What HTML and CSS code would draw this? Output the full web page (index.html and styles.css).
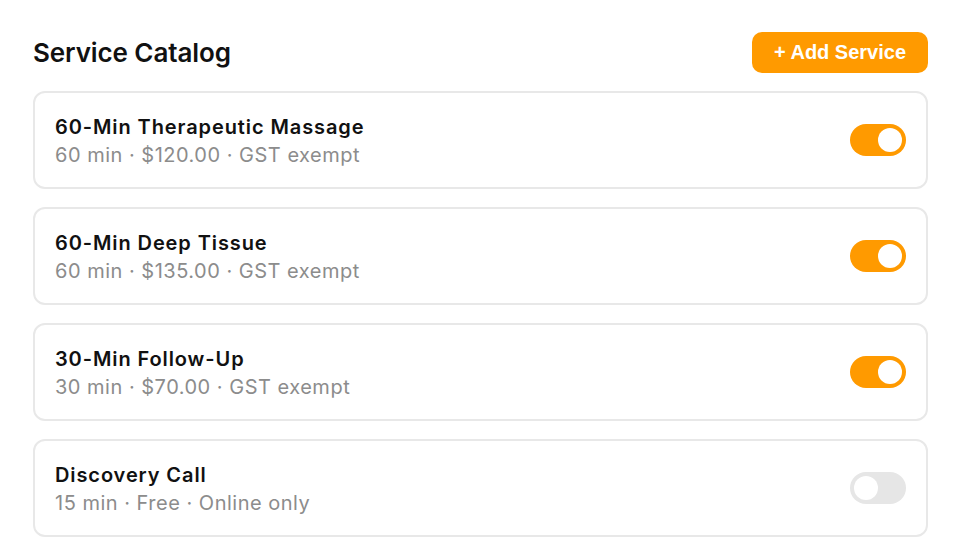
FILE: index.html
```html
<!DOCTYPE html>
<html>
<head>
<meta charset="utf-8">
<link rel="stylesheet" href="styles.css">
</head>
<body>
<div class="page">
  <div class="header">
    <h1 class="title">Service Catalog</h1>
    <button class="add-btn">+ Add Service</button>
  </div>
  <div class="list">
    <div class="card">
      <div class="info">
        <div class="name">60-Min Therapeutic Massage</div>
        <div class="meta">60 min · $120.00 · GST exempt</div>
      </div>
      <div class="toggle on"><span class="knob"></span></div>
    </div>
    <div class="card">
      <div class="info">
        <div class="name">60-Min Deep Tissue</div>
        <div class="meta">60 min · $135.00 · GST exempt</div>
      </div>
      <div class="toggle on"><span class="knob"></span></div>
    </div>
    <div class="card">
      <div class="info">
        <div class="name">30-Min Follow-Up</div>
        <div class="meta">30 min · $70.00 · GST exempt</div>
      </div>
      <div class="toggle on"><span class="knob"></span></div>
    </div>
    <div class="card">
      <div class="info">
        <div class="name">Discovery Call</div>
        <div class="meta">15 min · Free · Online only</div>
      </div>
      <div class="toggle"><span class="knob"></span></div>
    </div>
  </div>
</div>
</body>
</html>
```
FILE: styles.css
```css
* { box-sizing: border-box; }
html, body { margin: 0; padding: 0; background: #ffffff; }
body { font-family: Inter, "Noto Sans", sans-serif; color: #111111; }
.page { padding: 32px 32px 0 33px; }
.header { display: flex; align-items: center; justify-content: space-between; height: 41px; }
.title { margin: 0; font-size: 26px; font-weight: 600; letter-spacing: -0.1px; color: #111; }
.add-btn {
  background: #ff9a00; color: #fff; border: none; border-radius: 10px;
  height: 41px; width: 176px; font-family: "Liberation Sans", Arial, sans-serif;
  font-weight: 700; font-size: 20px; padding: 0;
}
.list { display: flex; flex-direction: column; gap: 18px; margin-top: 18px; }
.card {
  display: flex; align-items: center; justify-content: space-between;
  border: 2px solid #e8e8e8; border-radius: 12px; height: 98px;
  padding: 0 20px 0 20px;
}
.info { padding-top: 2px; }
.name { font-size: 20px; font-weight: 600; line-height: 28px; color: #111; letter-spacing: 0.9px; }
.meta { font-size: 20px; line-height: 28px; color: #8c8c8c; letter-spacing: 0.5px; }
.toggle { width: 56px; height: 32px; border-radius: 16px; background: #e6e6e6; position: relative; }
.toggle.on { background: #ff9a00; }
.knob { position: absolute; top: 4px; left: 4px; width: 24px; height: 24px; border-radius: 50%; background: #fff; }
.toggle.on .knob { left: 28px; }
```
